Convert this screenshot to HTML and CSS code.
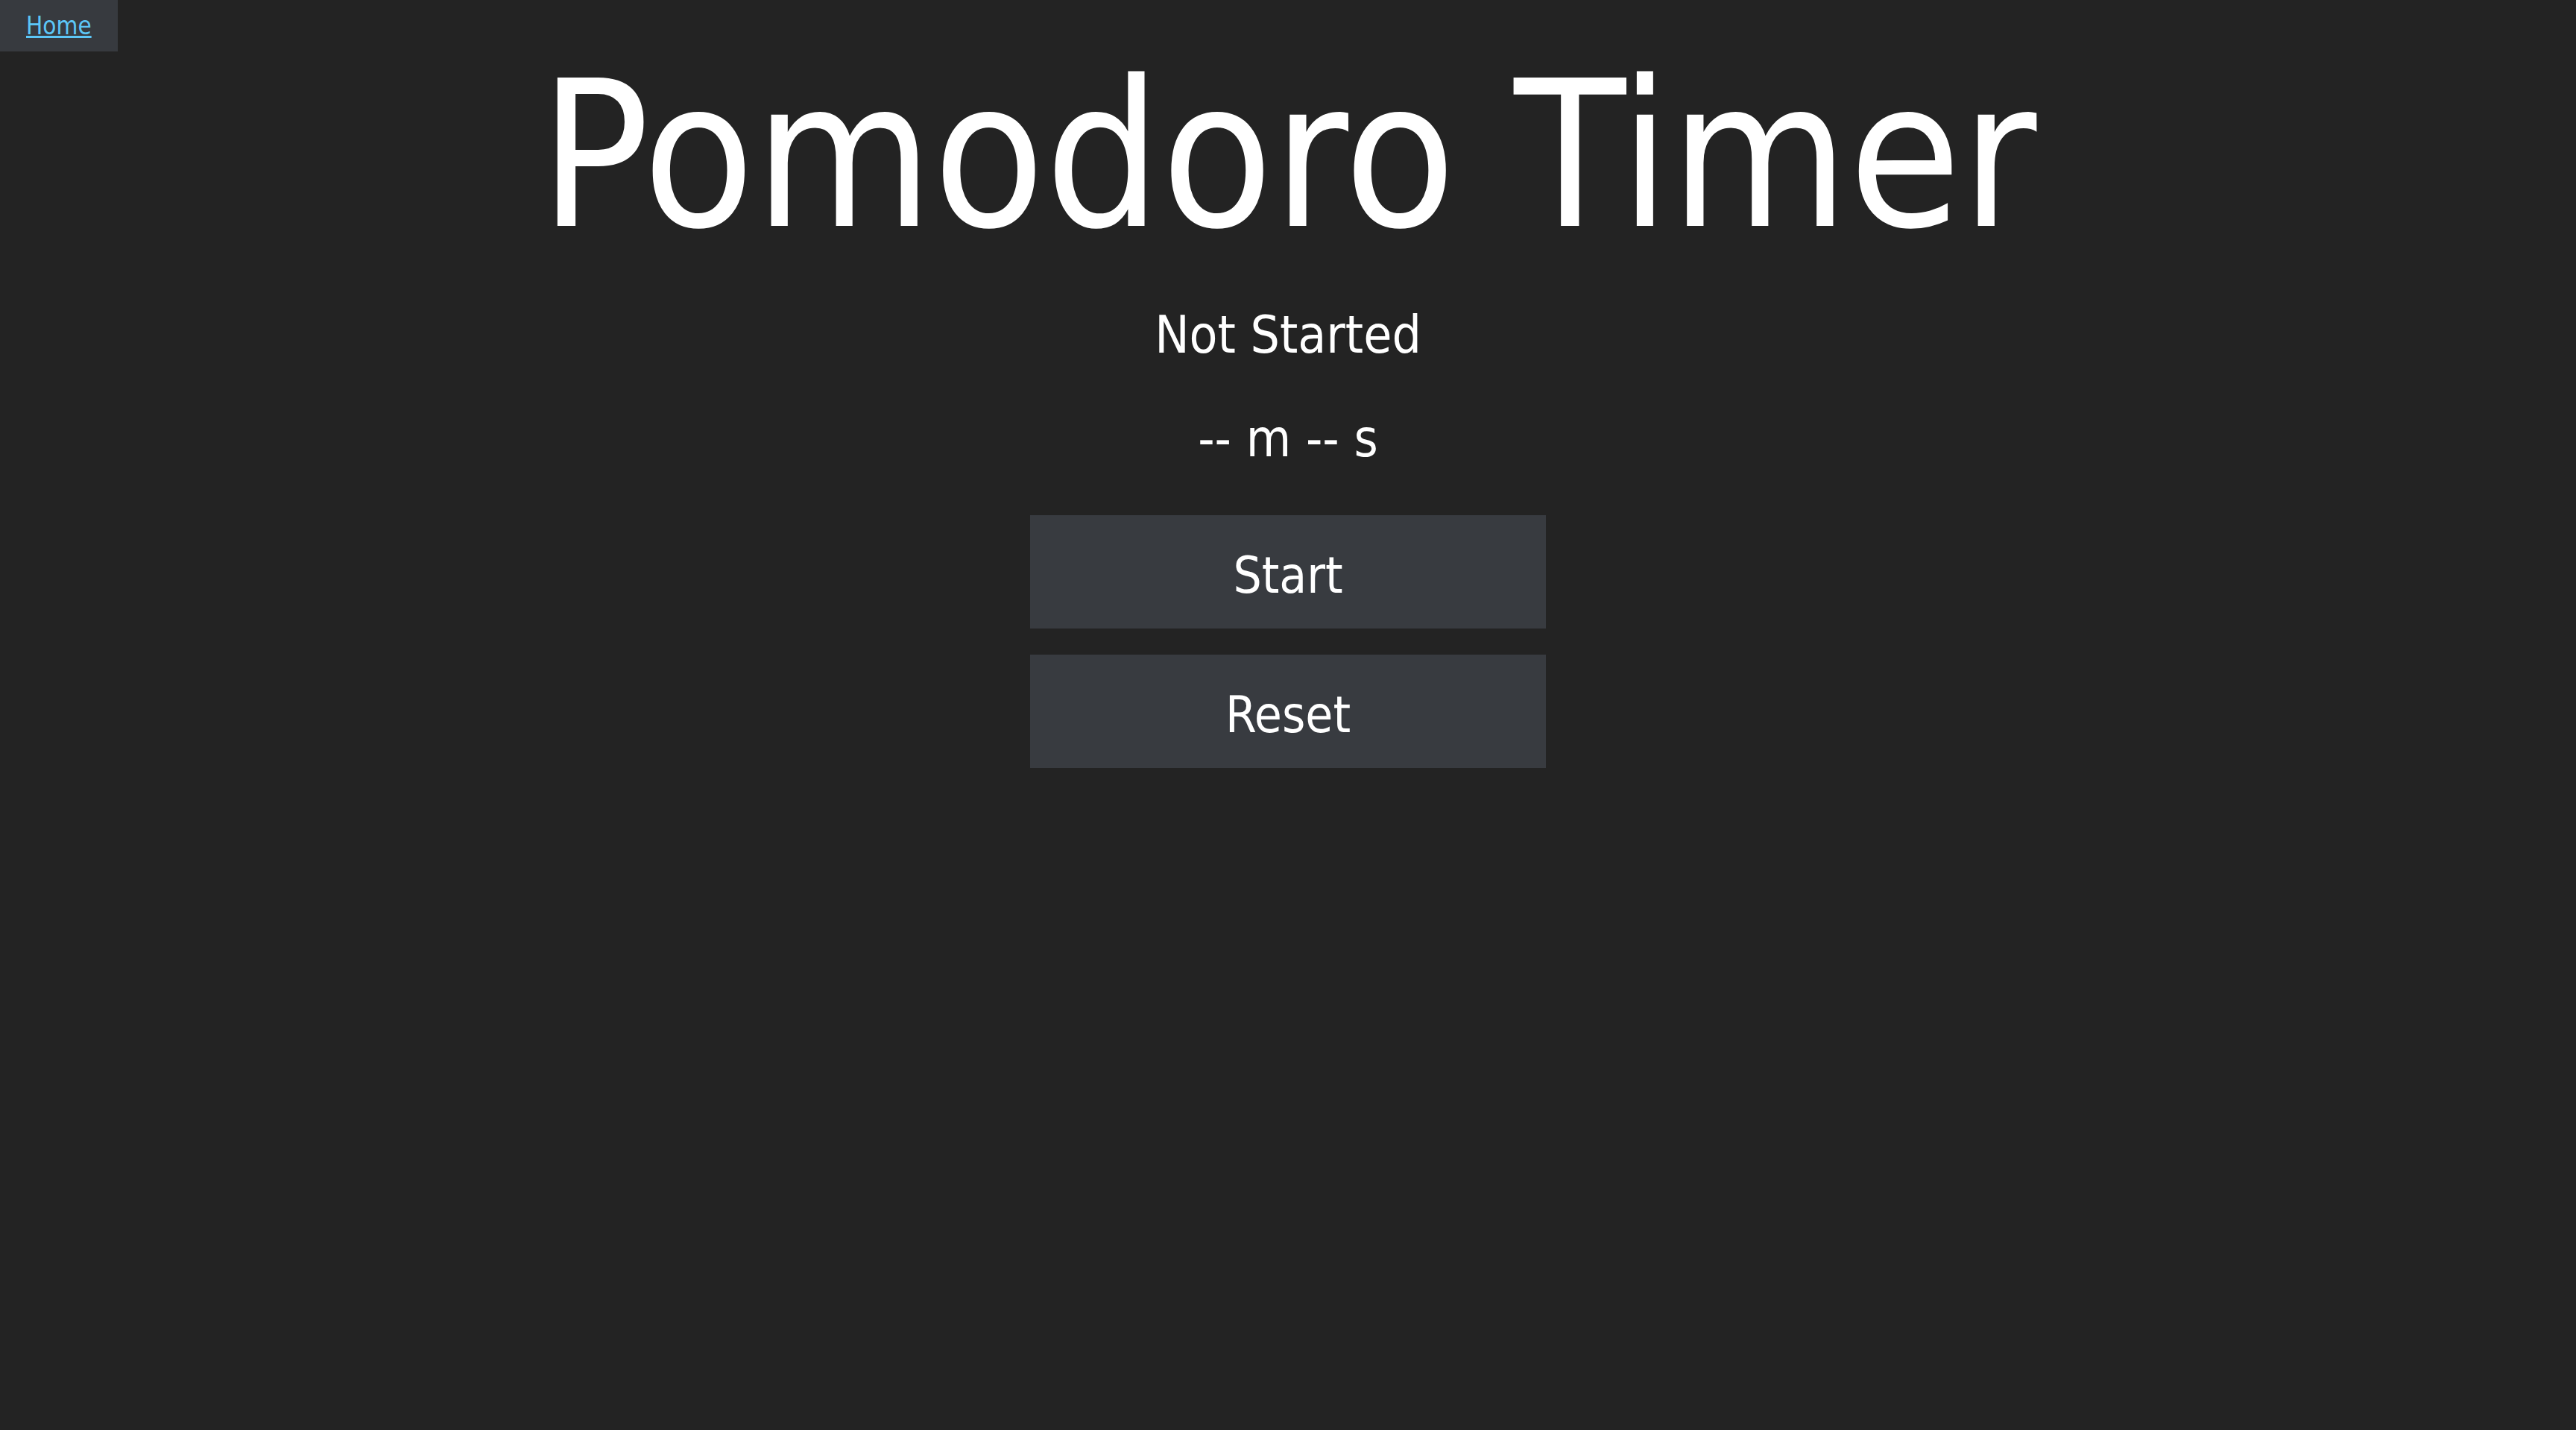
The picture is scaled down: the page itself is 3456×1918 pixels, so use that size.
FILE: index.html
```html
<!DOCTYPE html>
<html lang="en">
<head>
<meta charset="utf-8">
<title>Pomodoro Timer</title>
<link rel="stylesheet" href="styles.css">
</head>
<body>
<nav class="nav"><a class="home" href="#">Home</a></nav>
<main class="timer">
  <h1 class="title">Pomodoro Timer</h1>
  <p class="status">Not Started</p>
  <p class="clock">-- m -- s</p>
  <div class="actions">
    <button class="btn" type="button">Start</button>
    <button class="btn" type="button">Reset</button>
  </div>
</main>
</body>
</html>
```
FILE: styles.css
```css
html, body {
  margin: 0;
  padding: 0;
  background: #232323;
  color: #ffffff;
  font-family: "DejaVu Sans Condensed", "DejaVu Sans", sans-serif;
  font-stretch: condensed;
}
.nav {
  height: 69px;
}
.home {
  display: inline-block;
  height: 69px;
  padding: 0 35px;
  line-height: 69px;
  font-size: 33px;
  color: #5cc6f6;
  background: #373a3f;
}
.timer {
  display: flex;
  flex-direction: column;
  align-items: center;
}
.title {
  margin: 3px 0 0;
  font-size: 273px;
  font-weight: normal;
  line-height: 273px;
}
.status {
  margin: 70px 0 0;
  font-size: 69px;
  line-height: 69px;
}
.clock {
  margin: 70px 0 0;
  font-size: 69px;
  line-height: 69px;
}
.actions {
  margin-top: 68px;
  display: flex;
  flex-direction: column;
  gap: 35px;
}
.btn {
  width: 692px;
  height: 152px;
  box-sizing: border-box;
  padding: 10px 0 0;
  border: none;
  background: #383b40;
  color: #ffffff;
  font-family: inherit;
  font-stretch: condensed;
  font-size: 67px;
  line-height: 142px;
}
```
